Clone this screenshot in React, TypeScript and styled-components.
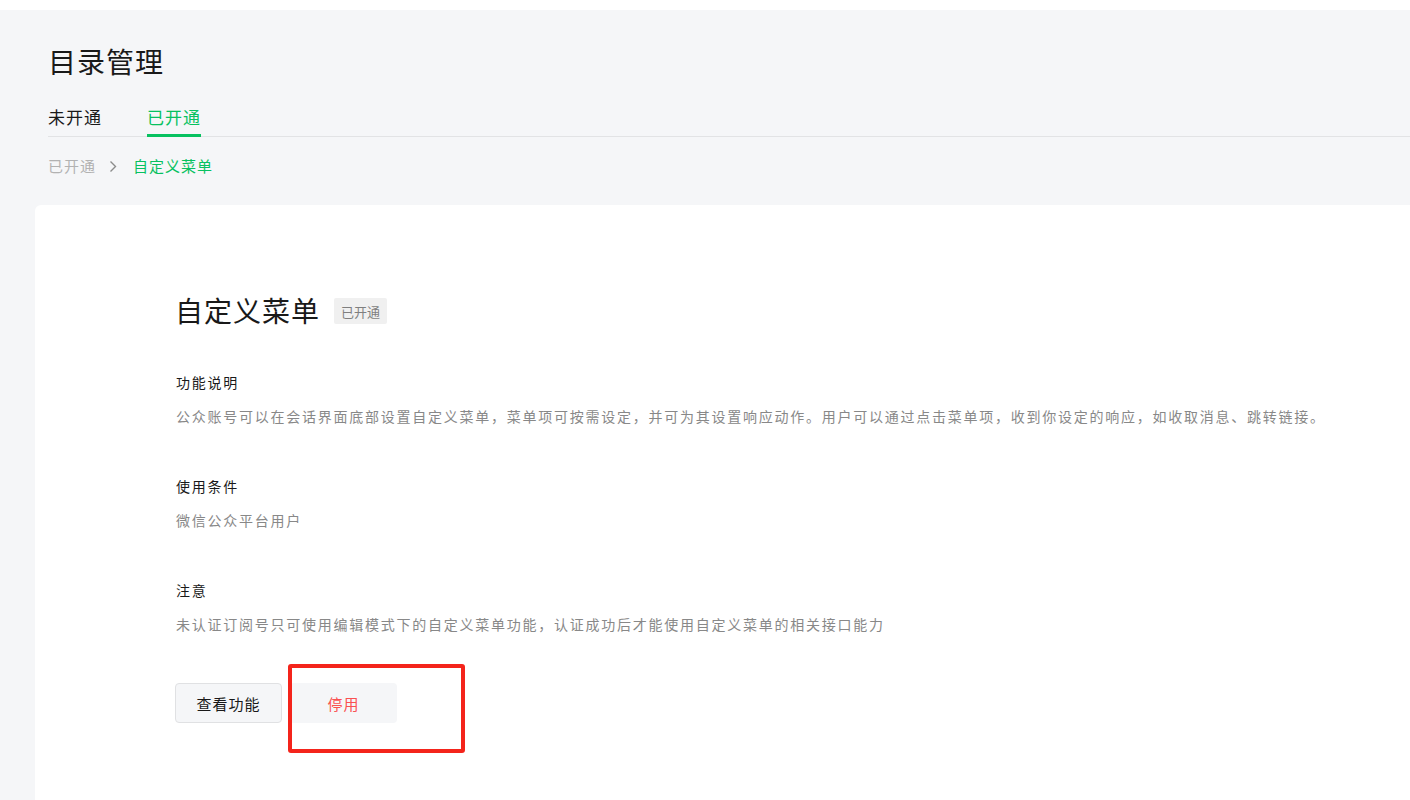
import React from "react";
import styled, { createGlobalStyle } from "styled-components";

const GlobalStyle = createGlobalStyle`
  html, body {
    margin: 0;
    padding: 0;
    background: #ffffff;
    overflow: hidden;
  }
  body {
    font-family: "Noto Sans CJK SC", "Noto Sans", sans-serif;
    color: #191919;
  }
  * { box-sizing: border-box; }
`;

const Page = styled.div`
  margin-top: 10px;
  height: 790px;
  background: #f5f6f8;
  display: flex;
  flex-direction: column;
`;

const Header = styled.div`
  margin-left: 48px;
  padding-top: 31px;
  display: flex;
  flex-direction: column;
`;

const PageTitle = styled.h1`
  margin: 0;
  font-size: 28px;
  line-height: 40px;
  font-weight: 400;
  letter-spacing: 1px;
  color: #191919;
`;

const TabBar = styled.div`
  margin-top: 24px;
  display: flex;
  border-bottom: 1px solid #e2e3e5;
`;

const Tab = styled.div<{ $active?: boolean }>`
  position: relative;
  margin-right: 45px;
  padding-bottom: 7px;
  font-size: 17px;
  line-height: 24px;
  letter-spacing: 1px;
  color: ${(p) => (p.$active ? "#07c160" : "#191919")};
  cursor: pointer;

  &::after {
    content: "";
    display: ${(p) => (p.$active ? "block" : "none")};
    position: absolute;
    left: 0;
    right: 0;
    bottom: -1px;
    height: 3px;
    background: #07c160;
  }
`;

const Breadcrumb = styled.div`
  margin-top: 17px;
  display: flex;
  align-items: center;
  font-size: 15px;
  line-height: 24px;
  letter-spacing: 1px;
`;

const Crumb = styled.span<{ $current?: boolean }>`
  color: ${(p) => (p.$current ? "#07c160" : "#b2b2b2")};
`;

const CrumbSep = styled.span`
  display: inline-flex;
  align-items: center;
  margin: 0 16px 0 13px;
`;

const Card = styled.div`
  margin: 27px 0 0 35px;
  flex: 1;
  background: #ffffff;
  border-radius: 6px 0 0 0;
  padding: 85px 0 0 140px;
  display: flex;
  flex-direction: column;
`;

const CardHead = styled.div`
  display: flex;
  align-items: center;
`;

const CardTitle = styled.h2`
  margin: 0;
  font-size: 28px;
  line-height: 40px;
  font-weight: 400;
  letter-spacing: 1px;
  color: #191919;
`;

const Badge = styled.span`
  margin-left: 14px;
  margin-top: 2px;
  height: 26px;
  padding: 0 7px;
  display: inline-flex;
  align-items: center;
  background: #f0f0f0;
  border-radius: 2px;
  font-size: 13px;
  color: #7f7f7f;
`;

const Section = styled.div`
  margin-top: 41px;
  padding-left: 1px;
  & + & {
    margin-top: 48px;
  }
`;

const SectionTitle = styled.div`
  font-size: 14px;
  line-height: 22px;
  letter-spacing: 1.75px;
  color: #191919;
`;

const SectionText = styled.div`
  margin-top: 12px;
  font-size: 14px;
  line-height: 22px;
  letter-spacing: 1.75px;
  color: #888888;
`;

const Actions = styled.div`
  position: relative;
  margin-top: 48px;
  display: flex;
  gap: 8px;
`;

const Button = styled.button<{ $danger?: boolean }>`
  width: 107px;
  height: 40px;
  padding: 0;
  border-radius: 4px;
  border: 1px solid ${(p) => (p.$danger ? "transparent" : "#e0e1e3")};
  background: #f5f6f8;
  font-family: inherit;
  font-size: 15px;
  letter-spacing: 1px;
  color: ${(p) => (p.$danger ? "#fa5151" : "#191919")};
  cursor: pointer;
`;

const Highlight = styled.div`
  position: absolute;
  left: 113px;
  top: -19px;
  width: 177px;
  height: 89px;
  border: 4px solid #f4241b;
  border-radius: 3px;
  pointer-events: none;
`;

const Chevron = () => (
  <svg width="8" height="13" viewBox="0 0 8 13" fill="none">
    <path d="M1.5 1.5L6.5 6.5L1.5 11.5" stroke="#8c8c8c" strokeWidth="1.4" />
  </svg>
);

export default function App() {
  return (
    <>
      <GlobalStyle />
      <Page>
        <Header>
          <PageTitle>目录管理</PageTitle>
          <TabBar>
            <Tab>未开通</Tab>
            <Tab $active>已开通</Tab>
          </TabBar>
          <Breadcrumb>
            <Crumb>已开通</Crumb>
            <CrumbSep>
              <Chevron />
            </CrumbSep>
            <Crumb $current>自定义菜单</Crumb>
          </Breadcrumb>
        </Header>
        <Card>
          <CardHead>
            <CardTitle>自定义菜单</CardTitle>
            <Badge>已开通</Badge>
          </CardHead>
          <Section>
            <SectionTitle>功能说明</SectionTitle>
            <SectionText>
              公众账号可以在会话界面底部设置自定义菜单，菜单项可按需设定，并可为其设置响应动作。用户可以通过点击菜单项，收到你设定的响应，如收取消息、跳转链接。
            </SectionText>
          </Section>
          <Section>
            <SectionTitle>使用条件</SectionTitle>
            <SectionText>微信公众平台用户</SectionText>
          </Section>
          <Section>
            <SectionTitle>注意</SectionTitle>
            <SectionText>
              未认证订阅号只可使用编辑模式下的自定义菜单功能，认证成功后才能使用自定义菜单的相关接口能力
            </SectionText>
          </Section>
          <Actions>
            <Button>查看功能</Button>
            <Button $danger>停用</Button>
            <Highlight />
          </Actions>
        </Card>
      </Page>
    </>
  );
}
